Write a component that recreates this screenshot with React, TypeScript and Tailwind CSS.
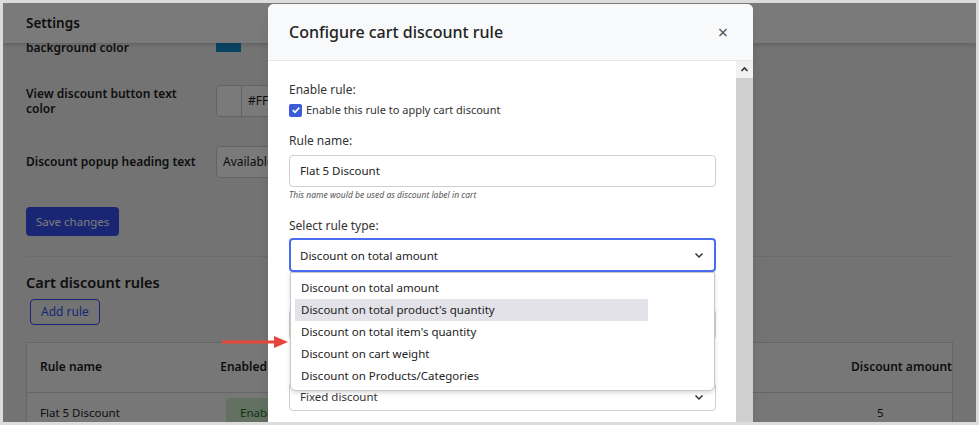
import React from "react";

const F = { fontFamily: '"Noto Sans", "Open Sans", sans-serif' };

export default function App() {
  return (
    <div className="relative w-[979px] h-[425px] overflow-hidden bg-[#dcdcdc] p-[3px] text-[#1d1d1d]" style={F}>
      <div className="relative w-full h-full overflow-hidden bg-[#f0f0f0]">
        {/* background page */}
        <div className="h-[40px] bg-white shadow-[0_2px_4px_rgba(0,0,0,0.15)] flex items-center px-[23px] text-[13.5px] font-semibold relative z-10">Settings</div>
        <div className="px-[23px]">
          <div className="flex h-[14px] items-center -mt-[2px]">
            <div className="w-[190px] text-[12px] font-semibold leading-[14px]">background color</div>
            <div className="w-[25px] h-[12px] bg-[#168fcf] -mt-[4px]" />
          </div>
          <div className="flex items-center mt-[30px]">
            <div className="w-[190px] text-[12px] font-semibold leading-[15px]">View discount button text<br />color</div>
            <div className="flex h-[32px] w-[60px] border border-[#d0d0d0] rounded-l bg-white">
              <div className="w-[25px] border-r border-[#d0d0d0]" />
              <div className="text-[12px] pl-[6px] leading-[30px]">#FFF</div>
            </div>
          </div>
          <div className="flex items-center mt-[29px]">
            <div className="w-[190px] text-[12px] font-semibold">Discount popup heading text</div>
            <div className="h-[32px] w-[60px] border border-[#d0d0d0] rounded-l bg-white text-[12px] pl-[6px] leading-[30px]">Available</div>
          </div>
          <button className="mt-[29px] h-[29px] px-[10px] bg-[#3450f0] text-white text-[11.5px] rounded-sm">Save changes</button>
          <div className="mt-[20px] border-t border-[#dedede]" />
          <div className="mt-[15px] text-[14.5px] font-semibold">Cart discount rules</div>
          <button className="mt-[5px] ml-[4px] h-[26px] px-[10px] border border-[#3450f0] rounded-sm text-[#3450f0] text-[12px]">Add rule</button>
          <div className="mt-[17px] border border-[#d6d6d6] bg-[#f8f8f8]">
            <div className="flex h-[50px] items-center text-[12px] font-semibold border-b border-[#d6d6d6] whitespace-nowrap">
              <div className="w-[199px] pl-[13px]">Rule name</div>
              <div className="w-[508px]">Enabled</div>
              <div className="w-[143px]">Type</div>
              <div>Discount amount</div>
            </div>
            <div className="flex h-[40px] items-center text-[11.5px]">
              <div className="w-[199px] pl-[13px]">Flat 5 Discount</div>
              <div className="w-[651px]"><span className="inline-block bg-[#cdeccd] text-[#1f6b2a] px-[14px] py-[6px] rounded text-[11.5px]">Enabled</span></div>
              <div>5</div>
            </div>
          </div>
        </div>

        {/* overlay */}
        <div className="absolute inset-0 bg-black/[0.52] z-20" />

        {/* arrow */}
        <svg className="absolute z-40 left-[217px] top-[330px]" width="70" height="18" viewBox="0 0 70 18">
          <line x1="2" y1="9" x2="56" y2="9" stroke="#e8463a" strokeWidth="3" />
          <polygon points="54,3 68,9 54,15" fill="#e8463a" />
        </svg>

        {/* modal */}
        <div className="absolute z-30 left-[265px] top-[1px] w-[485px] h-[440px] bg-white rounded-md shadow-lg overflow-hidden">
          <div className="h-[57px] bg-[#f8f9fa] border-b border-[#e6e6e6] flex items-center justify-between pl-[21px] pr-[25px]">
            <div className="text-[16px] font-medium text-[#222]">Configure cart discount rule</div>
            <div className="text-[18px] text-[#555] leading-none">×</div>
          </div>
          <div className="flex">
            <div className="w-[468px] pl-[21px] pr-[20px] pt-[20px] text-[#333]">
              <div className="text-[12px]">Enable rule:</div>
              <label className="flex items-center gap-[4px] mt-[3px] text-[11px]">
                <span className="w-[13px] h-[13px] rounded-[2px] bg-[#3b5bdb] flex items-center justify-center">
                  <svg width="10" height="10" viewBox="0 0 10 10"><path d="M1.8 5.2 L4 7.3 L8.3 2.6" stroke="white" strokeWidth="1.8" fill="none" /></svg>
                </span>
                Enable this rule to apply cart discount
              </label>
              <div className="text-[12px] mt-[13px]">Rule name:</div>
              <div className="mt-[5px] h-[32px] border border-[#cfcfcf] rounded-sm flex items-center px-[10px] text-[11.5px] text-[#222]">Flat 5 Discount</div>
              <div className="text-[8.5px] italic text-[#555] mt-[2px]">This name would be used as discount label in cart</div>
              <div className="text-[12px] mt-[16px]">Select rule type:</div>
              <div className="relative mt-[3px]">
                <div className="h-[34px] border-2 border-[#4a6cf0] rounded-sm flex items-center justify-between px-[9px] text-[11.5px] text-[#222]">
                  Discount on total amount
                  <svg width="12" height="12" viewBox="0 0 12 12"><path d="M2.5 4.5 L6 8 L9.5 4.5" stroke="#333" strokeWidth="1.5" fill="none" /></svg>
                </div>
                <div className="mt-[37px] h-[31px] border border-[#cfcfcf] rounded-sm" />
                <div className="mt-[42px] h-[29px] border border-[#cfcfcf] rounded-sm flex items-center justify-between px-[10px] text-[11.5px]">
                  Fixed discount
                  <svg width="12" height="12" viewBox="0 0 12 12"><path d="M2.5 4.5 L6 8 L9.5 4.5" stroke="#333" strokeWidth="1.5" fill="none" /></svg>
                </div>
                <div className="absolute left-[1px] right-[1px] top-[34px] h-[119px] bg-white border border-[#c8c8c8] rounded-b-md shadow-[0_2px_4px_rgba(0,0,0,0.15)] pt-[4px] pl-[4px] text-[11.5px] text-[#222]">
                  {["Discount on total amount", "Discount on total product's quantity", "Discount on total item's quantity", "Discount on cart weight", "Discount on Products/Categories"].map((t, i) => (
                    <div key={t} className={`h-[22px] leading-[22px] pl-[6px] w-[353px] ${i === 1 ? "bg-[#e3e2e8]" : ""}`}>{t}</div>
                  ))}
                </div>
              </div>
            </div>
            <div className="w-[17px] h-[380px] bg-[#cfcfcf]">
              <div className="h-[17px] bg-[#f1f1f1] flex items-center justify-center">
                <svg width="9" height="9" viewBox="0 0 9 9"><path d="M1.5 6 L4.5 3 L7.5 6" stroke="#333" strokeWidth="1.6" fill="none" /></svg>
              </div>
            </div>
          </div>
        </div>
      </div>
    </div>
  );
}
